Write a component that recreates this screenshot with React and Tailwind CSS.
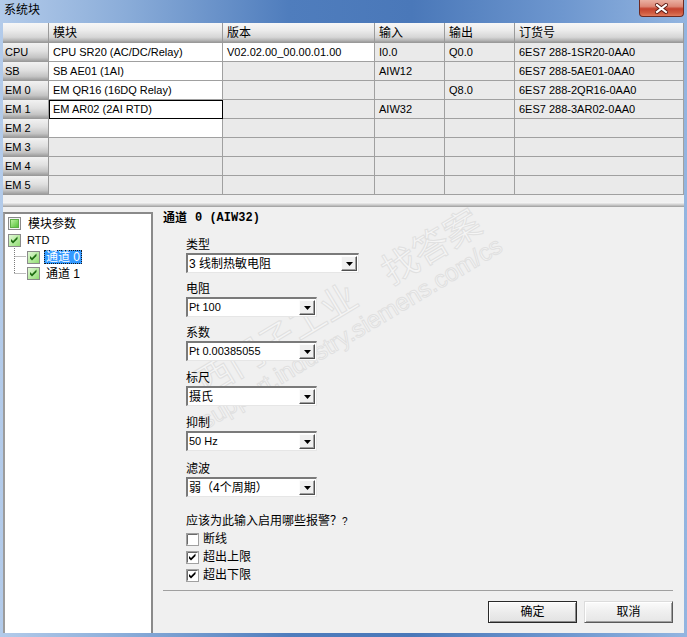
import React from "react";

const rows = [
  { h: "CPU", m: "CPU SR20 (AC/DC/Relay)", v: "V02.02.00_00.00.01.00", i: "I0.0", o: "Q0.0", n: "6ES7 288-1SR20-0AA0", mw: true, vw: true },
  { h: "SB", m: "SB AE01 (1AI)", v: "", i: "AIW12", o: "", n: "6ES7 288-5AE01-0AA0", mw: true },
  { h: "EM 0", m: "EM QR16 (16DQ Relay)", v: "", i: "", o: "Q8.0", n: "6ES7 288-2QR16-0AA0", mw: true },
  { h: "EM 1", m: "EM AR02 (2AI RTD)", v: "", i: "AIW32", o: "", n: "6ES7 288-3AR02-0AA0", mw: true, sel: true },
  { h: "EM 2", m: "", v: "", i: "", o: "", n: "", mw: true },
  { h: "EM 3", m: "", v: "", i: "", o: "", n: "" },
  { h: "EM 4", m: "", v: "", i: "", o: "", n: "" },
  { h: "EM 5", m: "", v: "", i: "", o: "", n: "" },
];

const headCls =
  "h-[20px] flex items-center pl-[4px] border-r border-b border-[#9a9a9a] bg-[linear-gradient(180deg,#f7f7f7_0%,#ebebeb_40%,#d6d6d6_75%,#b4b4b4_92%,#9c9c9c_100%)] text-[12px] leading-[14px] whitespace-nowrap";
const rowHeadCls =
  "h-[19px] flex items-center pl-[2px] border-r border-b border-[#9a9a9a] bg-[linear-gradient(180deg,#f2f2f2_0%,#e0e0e0_45%,#c4c4c4_80%,#9e9e9e_100%)] whitespace-nowrap";
const greyCell = "h-[19px] flex items-center pl-[4px] border-r border-b border-[#a0a0a0] bg-[#eaeaea] whitespace-nowrap";
const whiteCell = "h-[19px] flex items-center pl-[4px] border-r border-b border-[#a0a0a0] bg-white whitespace-nowrap";
const selCell =
  "h-[19px] flex items-center pl-[4px] border-r border-b border-black bg-white whitespace-nowrap shadow-[inset_1px_1px_0_#000]";

function Table() {
  return (
    <div className="grid grid-cols-[46px_174px_152px_70px_70px_169px] text-[11px]">
      <div className={headCls}></div>
      <div className={headCls}>模块</div>
      <div className={headCls}>版本</div>
      <div className={headCls}>输入</div>
      <div className={headCls}>输出</div>
      <div className={headCls}>订货号</div>
      {rows.map((r) => (
        <React.Fragment key={r.h}>
          <div className={rowHeadCls}>{r.h}</div>
          <div className={r.sel ? selCell : r.mw ? whiteCell : greyCell}>{r.m}</div>
          <div className={r.vw ? whiteCell : greyCell}>{r.v}</div>
          <div className={greyCell}>{r.i}</div>
          <div className={greyCell}>{r.o}</div>
          <div className={greyCell}>{r.n}</div>
        </React.Fragment>
      ))}
    </div>
  );
}

function TreeCheck({ partial }) {
  return (
    <svg width="13" height="13" viewBox="0 0 13 13" className="shrink-0">
      <defs>
        <linearGradient id="tg1" x1="0" y1="0" x2="1" y2="1">
          <stop offset="0" stopColor="#e6f9dc" />
          <stop offset="1" stopColor="#8ddc6d" />
        </linearGradient>
        <linearGradient id="tg2" x1="0" y1="0" x2="1" y2="1">
          <stop offset="0" stopColor="#c3f5a8" />
          <stop offset="1" stopColor="#4fbf32" />
        </linearGradient>
      </defs>
      <rect x="0.5" y="0.5" width="12" height="12" fill={partial ? "#f4f4f4" : "url(#tg1)"} stroke="#8a8a8a" />
      {partial ? (
        <rect x="2.5" y="2.5" width="8" height="8" fill="url(#tg2)" stroke="#5fae47" />
      ) : (
        <polygon points="3,5 5,7 9.5,2.5 9.5,5 5,9.5 3,7.5" fill="#1f6d12" />
      )}
    </svg>
  );
}

function Tree() {
  return (
    <div className="relative mt-[5px] w-[150px] shrink-0 bg-white border-2 border-b-0 border-t-[#8a8a8a] border-l-[#9c9c9c] border-r-[#8a8a8a] pt-[1px]">
      <svg className="absolute left-0 top-0" width="40" height="80">
        <path d="M9.5 34 V59.5 M9.5 42.5 H21 M9.5 59.5 H21" stroke="#7a7a7a" strokeDasharray="1 1" fill="none" />
      </svg>
      <div className="flex h-[17px] items-center pl-[3px]">
        <TreeCheck partial />
        <span className="ml-[7px] text-[12px] leading-[14px]">模块参数</span>
      </div>
      <div className="flex h-[17px] items-center pl-[3px]">
        <TreeCheck />
        <span className="ml-[6px] text-[11px] leading-[13px]">RTD</span>
      </div>
      <div className="flex h-[16px] items-center pl-[22px]">
        <TreeCheck />
        <span className="ml-[4px] h-[14px] flex items-center px-[1px] bg-[#3399ff] border border-dotted border-[#1a1a1a] text-white text-[12px] leading-[12px]">
          通道 0
        </span>
      </div>
      <div className="flex h-[17px] items-center pl-[22px]">
        <TreeCheck />
        <span className="ml-[6px] text-[12px] leading-[14px]">通道 1</span>
      </div>
    </div>
  );
}

function Combo({ className, children, cjk }) {
  return (
    <div
      className={
        "flex h-[20px] items-center bg-white border-t-2 border-l-2 border-b border-r border-t-[#7a7a7a] border-l-[#7a7a7a] border-b-[#e6e6e6] border-r-[#e6e6e6] " +
        className
      }
    >
      <span className={"flex-1 pl-[1px] whitespace-nowrap " + (cjk ? "text-[12px] leading-[14px]" : "text-[11px] leading-[13px]")}>
        {children}
      </span>
      <div className="mr-[1px] flex h-[15px] w-[16px] items-center justify-center bg-[#f0f0f0] border border-t-[#fcfcfc] border-l-[#fcfcfc] border-b-[#505050] border-r-[#505050] shadow-[inset_-1px_-1px_0_#a0a0a0]">
        <svg width="7" height="4" viewBox="0 0 7 4">
          <path d="M0 0h7L3.5 4z" fill="#000" />
        </svg>
      </div>
    </div>
  );
}

function Check({ checked }) {
  return (
    <svg width="13" height="13" viewBox="0 0 13 13" className="shrink-0">
      <rect x="0.5" y="0.5" width="12" height="12" fill="#fff" stroke="#a0a0a0" />
      <path d="M1.5 11.5 V1.5 H11.5" stroke="#6a6a6a" fill="none" />
      {checked && <polygon points="3,5 5,7 9.5,2.5 9.5,5 5,9.5 3,7.5" fill="#000" />}
    </svg>
  );
}

function Right() {
  return (
    <div className="relative flex-1 overflow-hidden">
      <div className="pointer-events-none absolute left-[186px] top-[96px] -translate-x-1/2 -translate-y-1/2 rotate-[-31deg] whitespace-nowrap text-[36px] leading-[40px] text-[#f5f5f5] [-webkit-text-stroke:1px_#e0e0e0]">
        西门子工业<span className="ml-[36px]">找答案</span>
      </div>
      <div className="pointer-events-none absolute left-[198px] top-[126px] -translate-x-1/2 -translate-y-1/2 rotate-[-31deg] whitespace-nowrap text-[24px] leading-[28px] text-[#f5f5f5] [-webkit-text-stroke:1px_#e0e0e0]">
        support.industry.siemens.com/cs
      </div>
      <div className="relative flex flex-col pl-[10px] pr-[11px] pt-[4px]">
        <div className="flex h-[14px] items-center font-bold">
          <span className="text-[12px] leading-[14px]">通道</span>
          <span className="ml-[8px] font-['Liberation_Mono',monospace] text-[12px] leading-[14px]">0 (AIW32)</span>
        </div>
        <div className="flex flex-col pl-[23px]">
          <div className="mt-[12px] h-[16px] text-[12px] leading-[16px]">类型</div>
          <Combo className="w-[173px]" cjk>3 线制热敏电阻</Combo>
          <div className="mt-[8px] h-[16px] text-[12px] leading-[16px]">电阻</div>
          <Combo className="w-[131px]">Pt 100</Combo>
          <div className="mt-[8px] h-[16px] text-[12px] leading-[16px]">系数</div>
          <Combo className="w-[131px]">Pt 0.00385055</Combo>
          <div className="mt-[9px] h-[16px] text-[12px] leading-[16px]">标尺</div>
          <Combo className="w-[131px]" cjk>摄氏</Combo>
          <div className="mt-[9px] h-[16px] text-[12px] leading-[16px]">抑制</div>
          <Combo className="w-[131px]">50 Hz</Combo>
          <div className="mt-[10px] h-[16px] text-[12px] leading-[16px]">滤波</div>
          <Combo className="w-[131px]" cjk>弱（4个周期）</Combo>
          <div className="mt-[16px] h-[16px] text-[12px] leading-[16px] whitespace-nowrap">
            应该为此输入启用哪些报警？<span className="text-[10px]">?</span>
          </div>
          <div className="mt-[1px] flex h-[18px] items-center">
            <Check />
            <span className="ml-[4px] text-[12px] leading-[14px]">断线</span>
          </div>
          <div className="flex h-[18px] items-center">
            <Check checked />
            <span className="ml-[4px] text-[12px] leading-[14px]">超出上限</span>
          </div>
          <div className="flex h-[18px] items-center">
            <Check checked />
            <span className="ml-[4px] text-[12px] leading-[14px]">超出下限</span>
          </div>
        </div>
        <div className="mt-[6px] h-px bg-[#a0a0a0]"></div>
        <div className="mt-[10px] flex justify-end gap-[7px]">
          <div className="flex h-[22px] w-[89px] items-center justify-center border border-[#2a2a2a] bg-[linear-gradient(180deg,#fafafa,#ececec_50%,#e2e2e2)] shadow-[inset_1px_1px_0_#fff,inset_-1px_-1px_0_#8a8a8a] text-[12px] leading-[14px]">
            确定
          </div>
          <div className="flex h-[22px] w-[89px] items-center justify-center border border-t-[#dcdcdc] border-l-[#dcdcdc] border-b-[#5a5a5a] border-r-[#5a5a5a] bg-[linear-gradient(180deg,#fbfbfb,#efefef_50%,#e6e6e6)] shadow-[inset_1px_1px_0_#fff,inset_-1px_-1px_0_#a0a0a0] text-[12px] leading-[14px]">
            取消
          </div>
        </div>
      </div>
    </div>
  );
}

export default function App() {
  return (
    <div className="relative h-[637px] w-[687px] overflow-hidden font-['Liberation_Sans','Noto_Sans_CJK_SC',sans-serif] text-black bg-[linear-gradient(90deg,#b3cbea_0%,#8badd9_18%,#4f7dbd_42%,#4a78b9_60%,#6e97cf_82%,#93b5e0_100%)]">
      <div className="flex h-[23px] items-start">
        <span className="ml-[4px] mt-[3px] text-[12px] leading-[15px]">系统块</span>
        <div className="ml-auto mr-[3px] flex h-[17px] w-[45px] items-center justify-center rounded-b-[4px] border border-t-0 border-[#6e2a22] bg-[linear-gradient(180deg,#eab0a2_0%,#dd8877_40%,#c4432f_55%,#cf5a40_80%,#e07a5c_100%)]">
          <svg width="13" height="11" viewBox="0 0 13 11">
            <path d="M2 2 L11 9 M11 2 L2 9" stroke="#5a1810" strokeWidth="4" strokeLinecap="square" />
            <path d="M2 2 L11 9 M11 2 L2 9" stroke="#ffffff" strokeWidth="2.2" strokeLinecap="square" />
          </svg>
        </div>
      </div>
      <div className="mx-[3px] flex h-[610px] flex-col bg-[#f0f0f0]">
        <Table />
        <div className="h-[7px] shrink-0"></div>
        <div className="h-[5px] shrink-0 bg-[linear-gradient(180deg,#fafafa,#dcdcdc_40%,#b4b4b4_80%,#9a9a9a)]"></div>
        <div className="flex min-h-0 flex-1">
          <Tree />
          <Right />
        </div>
      </div>
    </div>
  );
}
